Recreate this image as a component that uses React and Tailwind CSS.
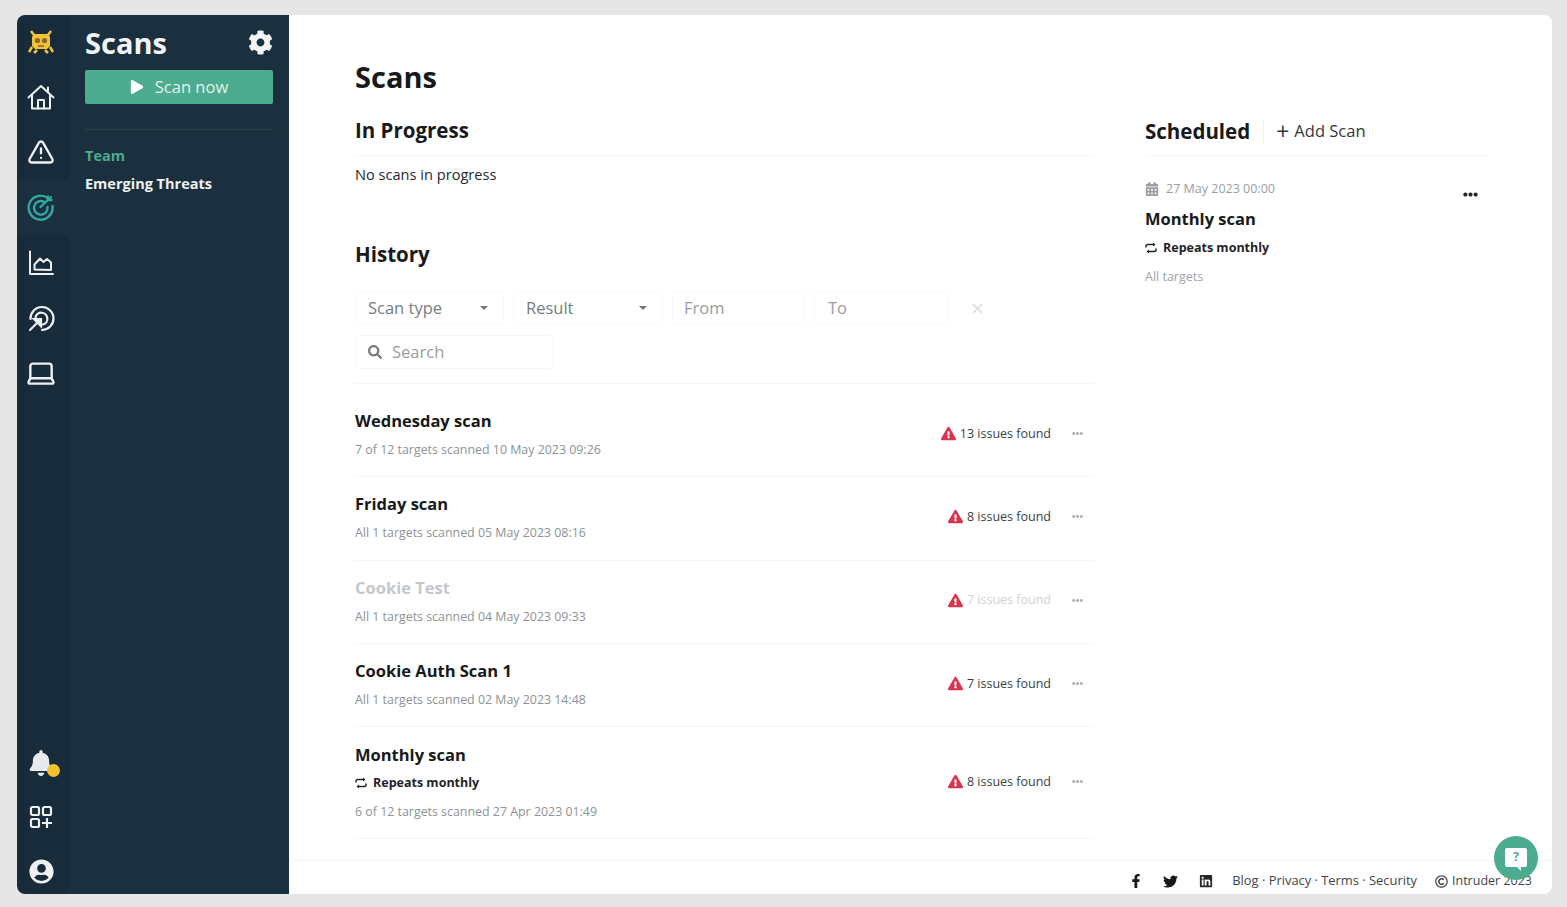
import React from "react";
import { FaCog, FaPlay, FaBell, FaUserCircle, FaFacebookF, FaTwitter, FaLinkedin, FaExclamationTriangle, FaCalendarAlt, FaSearch, FaEllipsisH, FaRegCopyright } from "react-icons/fa";
import { Laptop, TriangleAlert } from "lucide-react";

const Logo = () => (
  <svg width="26" height="26" viewBox="0 0 26 26">
    <path d="M6 5h14l2 3v9l-3 3H7l-3-3V8z" fill="#f0c33c" />
    <path d="M6 6L3 2M20 6l3-4M4 18l-3 5M22 18l3 5M9 21l-3 3M17 21l3 3" stroke="#f0c33c" strokeWidth="2.6" fill="none" />
    <circle cx="9.5" cy="11.5" r="2.6" fill="#8a6a20" />
    <circle cx="16.5" cy="11.5" r="2.6" fill="#8a6a20" />
    <path d="M10 17h6" stroke="#8a6a20" strokeWidth="1.6" />
  </svg>
);
const Home = () => (
  <svg width="28" height="28" viewBox="0 0 28 28" fill="none" stroke="#eef1f2" strokeWidth="2" strokeLinejoin="round" strokeLinecap="round">
    <path d="M1.5 14.5L14 3l12.5 11.5" />
    <path d="M5 12v13.5h18V12" />
    <path d="M11 25.5V17h6v8.5" />
    <path d="M21 8V4.5" />
  </svg>
);
const ScanTarget = () => (
  <svg width="28" height="28" viewBox="0 0 28 28" fill="none" stroke="#2fa6a0" strokeWidth="2.4" strokeLinecap="round">
    <path d="M21 5.2A12 12 0 1 0 25.5 13" />
    <path d="M17.5 9.2A6.8 6.8 0 1 0 20.5 14" />
    <path d="M13.5 14L24 4" />
    <path d="M21 3.5v3.5h3.5" />
  </svg>
);
const AreaChart = () => (
  <svg width="28" height="28" viewBox="0 0 28 28" fill="none" stroke="#eef1f2" strokeWidth="2" strokeLinecap="round" strokeLinejoin="round">
    <path d="M3 2.5V25h23" />
    <path d="M7.5 20.5v-5L13 9.5l3.5 3.5 3.5-3 4 3.5v7.5z" />
  </svg>
);
const Spiral = () => (
  <svg width="28" height="28" viewBox="0 0 28 28" fill="none" stroke="#eef1f2" strokeWidth="2.2" strokeLinecap="round">
    <path d="M3.5 15A11.5 11.5 0 1 1 15 26" />
    <path d="M8.5 13.5A6 6 0 1 1 16 20.5" />
    <path d="M3 26L13 16" />
    <path d="M7 15h7v7z" fill="#eef1f2" />
  </svg>
);
const Apps = () => (
  <svg width="24" height="24" viewBox="0 0 24 24" fill="none" stroke="#eef1f2" strokeWidth="2.2">
    <rect x="2" y="2" width="8" height="8" rx="1.5" />
    <rect x="14" y="2" width="8" height="8" rx="1.5" />
    <rect x="2" y="14" width="8" height="8" rx="1.5" />
    <path d="M18 13v10M13 18h10" />
  </svg>
);
const Repeat = () => (
  <svg width="12" height="12" viewBox="0 0 12 12" fill="none" stroke="#1f2428" strokeWidth="1.5">
    <path d="M1 5.5V4a1.5 1.5 0 0 1 1.5-1.5H9" />
    <path d="M8 0.5l2.5 2-2.5 2z" fill="#1f2428" stroke="none" />
    <path d="M11 6.5V8a1.5 1.5 0 0 1-1.5 1.5H3" />
    <path d="M4 7.5l-2.5 2 2.5 2z" fill="#1f2428" stroke="none" />
  </svg>
);

const Caret = () => <span className="w-0 h-0 border-x-[4px] border-x-transparent border-t-[4px] border-t-[#777]" />;

const rows = [
  { t: "Wednesday scan", s: "7 of 12 targets scanned 10 May 2023 09:26", n: "13 issues found" },
  { t: "Friday scan", s: "All 1 targets scanned 05 May 2023 08:16", n: "8 issues found" },
  { t: "Cookie Test", s: "All 1 targets scanned 04 May 2023 09:33", n: "7 issues found", faded: true },
  { t: "Cookie Auth Scan 1", s: "All 1 targets scanned 02 May 2023 14:48", n: "7 issues found" },
  { t: "Monthly scan", s: "6 of 12 targets scanned 27 Apr 2023 01:49", n: "8 issues found", repeat: true },
];

function Row({ r }) {
  return (
    <div className={`flex items-center justify-between border-b border-[#f5f6f7] ${r.repeat ? "h-[112px]" : "h-[83.3px]"}`}>
      <div className="flex flex-col pb-[1px]">
        <div className={`text-[16.5px] leading-[22px] font-bold ${r.faded ? "text-[#c4c7ca]" : "text-[#17191b]"}`}>{r.t}</div>
        {r.repeat && (
          <div className="flex items-center gap-[6px] mt-[8px] text-[12.5px] leading-[18px] font-bold text-[#1f2428]"><Repeat />Repeats monthly</div>
        )}
        <div className={`${r.repeat ? "mt-[11px]" : "mt-[9px]"} text-[12.4px] leading-[18px] text-[#8d9296]`}>{r.s}</div>
      </div>
      <div className={`flex items-center pr-[12px] ${r.repeat ? "-mt-[2px]" : "-mt-[3px]"}`}>
        <FaExclamationTriangle className="text-[#d9344f] text-[15px] mr-[4px]" />
        <span className={`text-[12.5px] leading-[18px] ${r.faded ? "text-[#d0d2d4]" : "text-[#3a3f43]"}`}>{r.n}</span>
        <FaEllipsisH className="text-[#b0b3b6] text-[11px] ml-[21px]" />
      </div>
    </div>
  );
}

export default function App() {
  return (
    <div className="w-[1567px] h-[907px] bg-[#e6e6e6] pt-[15px] pl-[17px] pr-[15px] pb-[13px] overflow-hidden" style={{ fontFamily: '"Open Sans", "Noto Sans", sans-serif' }}>
      <div className="relative flex h-full rounded-lg overflow-hidden bg-white">
        <nav className="w-[52px] shrink-0 bg-[#172b3a] flex flex-col items-center pt-[14px] pb-[10px]">
          <div className="flex flex-col items-center w-full pr-[4px]"><Logo /></div>
          <div className="flex flex-col items-center w-full pr-[4px] mt-[28px]"><Home /></div>
          <div className="flex justify-center w-full pr-[4px] mt-[27px]"><TriangleAlert size={28} color="#eef1f2" strokeWidth={2} /></div>
          <div className="flex justify-center w-full pr-[4px] mt-[13px] py-[14px] bg-[#1b303e]"><ScanTarget /></div>
          <div className="flex justify-center w-full pr-[4px] mt-[14px]"><AreaChart /></div>
          <div className="flex justify-center w-full pr-[4px] mt-[27px]"><Spiral /></div>
          <div className="flex justify-center w-full pr-[4px] mt-[25px]"><Laptop size={32} color="#eef1f2" strokeWidth={1.8} /></div>
          <div className="flex-1" />
          <div className="relative mr-[4px]">
            <FaBell size={26} color="#e8ebec" />
            <span className="absolute -right-[6px] -bottom-[1px] w-[13px] h-[13px] rounded-full bg-[#f2c230]" />
          </div>
          <div className="mt-[29px] mr-[4px]"><Apps /></div>
          <div className="mt-[30px] mr-[4px]"><FaUserCircle size={25} color="#eef1f2" /></div>
        </nav>
        <aside className="w-[220px] shrink-0 bg-[#1b303e] px-[16px] pt-[9px]">
          <div className="flex items-center justify-between">
            <span className="text-[29px] leading-[38px] font-bold text-[#f2f4f5]">Scans</span>
            <FaCog size={25} color="#f2f4f5" className="-mt-[1px]" />
          </div>
          <button className="mt-[8px] w-full h-[34px] rounded-[2px] bg-[#4dab8f] flex items-center justify-center text-white text-[16.5px]">
            <FaPlay size={14} className="mr-[11px]" />
            <span className="text-[#e3f2ec]">Scan now</span>
          </button>
          <div className="mt-[25px] border-t border-[#2a3e4b]" />
          <div className="mt-[16px] text-[14.5px] leading-[20px] font-bold text-[#4dab8f]">Team</div>
          <div className="mt-[8px] text-[14.5px] leading-[20px] font-bold text-[#eef1f2]">Emerging Threats</div>
        </aside>
        <main className="flex-1 flex flex-col min-w-0">
          <div className="flex-1 flex pl-[66px] min-h-0">
            <section className="w-[740px] shrink-0 pt-[42px]">
              <h1 className="text-[29px] leading-[40px] font-bold text-[#17191b]">Scans</h1>
              <h2 className="mt-[19px] text-[20.5px] leading-[28px] font-bold text-[#17191b] pb-[11px] border-b border-[#f5f6f7]">In Progress</h2>
              <p className="mt-[8px] text-[14.6px] leading-[20px] text-[#26292c]">No scans in progress</p>
              <h2 className="mt-[56px] text-[20.5px] leading-[28px] font-bold text-[#17191b]">History</h2>
              <div className="mt-[23px] flex items-center h-[34px] text-[16.5px] text-[#777c80]">
                <div className="w-[149px] h-full border border-[#f8f8f9] rounded flex items-center justify-between pl-[12px] pr-[15px]"><span>Scan type</span><Caret /></div>
                <div className="ml-[9px] w-[150px] h-full border border-[#f8f8f9] rounded flex items-center justify-between pl-[12px] pr-[15px]"><span>Result</span><Caret /></div>
                <div className="ml-[9px] w-[133px] h-full border border-[#f8f8f9] rounded flex items-center pl-[11px] text-[#999da0]">From</div>
                <div className="ml-[9px] w-[134px] h-full border border-[#f8f8f9] rounded flex items-center pl-[13px] text-[#999da0]">To</div>
                <span className="ml-[22px] text-[#dfe1e2] text-[18px] leading-none">✕</span>
              </div>
              <div className="mt-[10px] w-[199px] h-[34px] border border-[#f6f6f7] rounded flex items-center pl-[12px] text-[16.5px] text-[#999da0]">
                <FaSearch size={14} color="#777c80" className="mr-[10px]" />Search
              </div>
              <div className="mt-[14px] border-b border-[#f5f6f7]" />
              <div className="mt-[10px]">
                {rows.map((r) => <Row key={r.t} r={r} />)}
              </div>
            </section>
            <section className="ml-[50px] w-[345px] shrink-0 pt-[102px]">
              <div className="flex items-center pb-[10px] border-b border-[#f5f6f7]">
                <h2 className="text-[20.5px] leading-[28px] font-bold text-[#17191b]">Scheduled</h2>
                <span className="ml-[13px] h-[24px] border-l border-[#eef0f1]" />
                <span className="ml-[12px] text-[16.5px] leading-[28px] text-[#33383c] flex items-center">
                  <span className="text-[23px] font-normal leading-[28px] mr-[5px]">+</span>Add Scan
                </span>
              </div>
              <div className="mt-[24px] flex items-start justify-between pr-[12px]">
                <div>
                  <div className="flex items-center text-[12.5px] leading-[18px] text-[#9a9ea2]"><FaCalendarAlt size={14} className="mr-[7px]" />27 May 2023 00:00</div>
                  <div className="mt-[9px] text-[16.5px] leading-[24px] font-bold text-[#17191b]">Monthly scan</div>
                  <div className="mt-[8px] flex items-center gap-[6px] text-[12.5px] leading-[18px] font-bold text-[#1f2428]"><Repeat />Repeats monthly</div>
                  <div className="mt-[11px] text-[12.5px] leading-[18px] text-[#a0a4a7]">All targets</div>
                </div>
                <FaEllipsisH size={15} color="#26292c" className="mt-[7px]" />
              </div>
            </section>
          </div>
          <footer className="h-[34px] shrink-0 border-t border-[#f5f6f7] flex items-center justify-end pt-[7px] pr-[20px] text-[12.9px] text-[#3f4448]">
            <FaFacebookF size={14} color="#17191b" />
            <FaTwitter size={15} color="#17191b" className="ml-[20px]" />
            <FaLinkedin size={14} color="#26292c" className="ml-[21px]" />
            <span className="ml-[19px]">Blog · Privacy · Terms · Security</span>
            <FaRegCopyright size={13} className="ml-[18px] mr-[4px]" />
            <span className="text-[12.5px]">Intruder 2023</span>
          </footer>
        </main>
        <div className="absolute right-[14px] bottom-[14px] w-[44px] h-[44px] rounded-full bg-[#4dab8f] flex items-center justify-center">
          <div className="relative w-[22px] h-[19px] rounded-[2px] bg-white flex items-center justify-center text-[12px] font-bold text-[#4dab8f] leading-none -mt-[2px]">
            ?
            <span className="absolute -bottom-[4px] right-[6px] w-0 h-0 border-l-[5px] border-l-transparent border-t-[5px] border-t-white" />
          </div>
        </div>
      </div>
    </div>
  );
}
